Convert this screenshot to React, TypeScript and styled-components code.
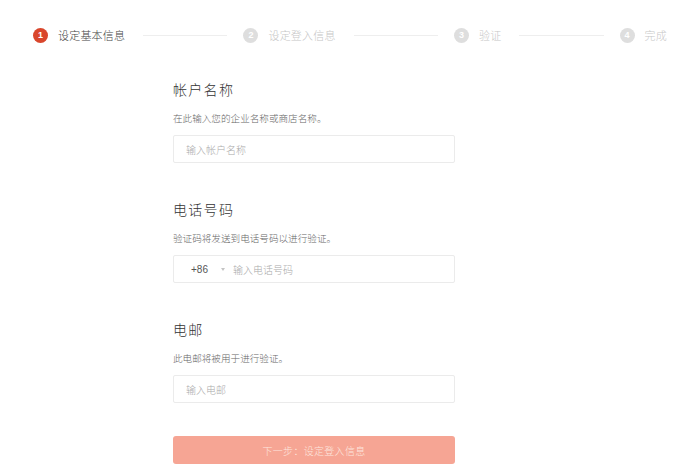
import React from "react";
import styled, { createGlobalStyle } from "styled-components";

const Global = createGlobalStyle`
  html, body { margin: 0; padding: 0; background: #fff; }
  body { font-family: "Noto Sans CJK SC", "Noto Sans", sans-serif; }
  * { box-sizing: border-box; }
`;

const Page = styled.div`
  width: 700px;
  height: 470px;
  background: #fff;
  overflow: hidden;
`;

const Steps = styled.div`
  display: flex;
  align-items: center;
  height: 20px;
  margin-top: 25px;
  padding: 0 33px;
`;

const Step = styled.div`
  display: flex;
  align-items: center;
  gap: 10px;
`;

const Circle = styled.span<{ $active?: boolean }>`
  width: 15px;
  height: 15px;
  border-radius: 50%;
  background: ${(p) => (p.$active ? "#d9462c" : "#dedede")};
  color: #fff;
  font-family: "Liberation Sans", Arial, sans-serif;
  font-size: 9px;
  font-weight: bold;
  display: flex;
  align-items: center;
  justify-content: center;
  flex-shrink: 0;
`;

const StepLabel = styled.span<{ $active?: boolean }>`
  font-size: 11px;
  font-weight: 300;
  letter-spacing: 0.2px;
  color: ${(p) => (p.$active ? "#444" : "#c6c6c6")};
  white-space: nowrap;
`;

const Line = styled.div`
  flex: 1;
  height: 1px;
  background: #eeeeee;
  margin: 0 16px 0 18px;
`;

const Form = styled.div`
  margin-top: 34px;
  margin-left: 173px;
  width: 282px;
  display: flex;
  flex-direction: column;
`;

const Section = styled.div`
  display: flex;
  flex-direction: column;
  margin-bottom: 36px;
`;

const Title = styled.div`
  font-size: 14px;
  font-weight: 300;
  line-height: 20px;
  letter-spacing: 1.3px;
  color: #333;
`;

const Desc = styled.div`
  margin-top: 12px;
  font-size: 9.6px;
  font-weight: 300;
  line-height: 14px;
  color: #666;
`;

const Field = styled.div`
  margin-top: 10px;
  height: 28px;
  border: 1px solid #ebebeb;
  border-radius: 2px;
  display: flex;
  align-items: center;
  padding-left: 12px;
  background: #fff;
`;

const Placeholder = styled.span`
  font-size: 10px;
  font-weight: 300;
  color: #aaa;
`;

const Code = styled.span`
  font-family: "Liberation Sans", Arial, sans-serif;
  font-size: 10px;
  color: #555;
  margin-left: 5px;
`;

const Caret = styled.span`
  width: 0;
  height: 0;
  border-left: 2.5px solid transparent;
  border-right: 2.5px solid transparent;
  border-top: 3px solid #c4c4c4;
  margin: 0 8px 0 13px;
`;

const Button = styled.div`
  margin-top: -3px;
  height: 28px;
  border-radius: 3px;
  background: #f6a594;
  color: #fde6df;
  font-size: 10px;
  font-weight: 300;
  display: flex;
  align-items: center;
  justify-content: center;
  letter-spacing: 0.3px;
`;

const steps = ["设定基本信息", "设定登入信息", "验证", "完成"];

export default function App() {
  return (
    <Page>
      <Global />
      <Steps>
        {steps.map((s, i) => (
          <React.Fragment key={s}>
            {i > 0 && <Line />}
            <Step>
              <Circle $active={i === 0}>{i + 1}</Circle>
              <StepLabel $active={i === 0}>{s}</StepLabel>
            </Step>
          </React.Fragment>
        ))}
      </Steps>
      <Form>
        <Section>
          <Title>帐户名称</Title>
          <Desc>在此输入您的企业名称或商店名称。</Desc>
          <Field>
            <Placeholder>输入帐户名称</Placeholder>
          </Field>
        </Section>
        <Section>
          <Title>电话号码</Title>
          <Desc>验证码将发送到电话号码以进行验证。</Desc>
          <Field>
            <Code>+86</Code>
            <Caret />
            <Placeholder>输入电话号码</Placeholder>
          </Field>
        </Section>
        <Section>
          <Title>电邮</Title>
          <Desc>此电邮将被用于进行验证。</Desc>
          <Field>
            <Placeholder>输入电邮</Placeholder>
          </Field>
        </Section>
        <Button>下一步：设定登入信息</Button>
      </Form>
    </Page>
  );
}
